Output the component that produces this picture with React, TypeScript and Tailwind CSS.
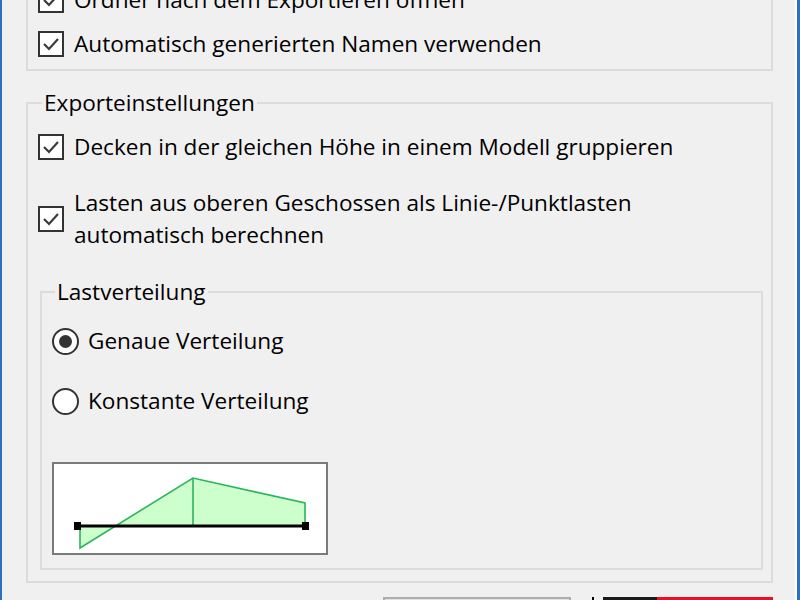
import React from "react";

function Check() {
  return (
    <div className="w-[26px] h-[26px] border-2 border-[#333333] bg-white flex items-center justify-center shrink-0">
      <svg width="20" height="20" viewBox="0 0 20 20">
        <path d="M3 10 L8 15 L17 5" stroke="#3a3a3a" strokeWidth="2.2" fill="none" />
      </svg>
    </div>
  );
}

function Radio({ on }: { on?: boolean }) {
  return (
    <div className="w-[27px] h-[27px] rounded-full border-2 border-[#333333] bg-white flex items-center justify-center shrink-0">
      {on ? <div className="w-[13px] h-[13px] rounded-full bg-[#333333]" /> : null}
    </div>
  );
}

function Diagram() {
  return (
    <div className="mt-[45px] ml-[10px] w-[276px] h-[93px] border-2 border-[#7a7a7a] bg-white">
      <svg width="272" height="89" viewBox="2 2 272 89">
        <polygon points="28,64 28,86 141,16 253,41 253,64" fill="#ccffcc" />
        <polyline points="28,64 28,86 141,16 253,41 253,64" fill="none" stroke="#2cb55c" strokeWidth="1.6" />
        <line x1="141" y1="16" x2="141" y2="64" stroke="#2cb55c" strokeWidth="1.6" />
        <line x1="25" y1="64" x2="254" y2="64" stroke="#000" strokeWidth="3" />
        <rect x="22" y="60" width="7" height="8" fill="#000" />
        <rect x="250" y="60" width="7" height="8" fill="#000" />
      </svg>
    </div>
  );
}

export default function App() {
  return (
    <div className="w-[800px] h-[600px] overflow-hidden bg-[#f0f0f0] flex font-['Open_Sans',sans-serif] text-[22.6px] text-black">
      <div className="w-[2px] bg-[#2a72bd] shrink-0" />
      <div className="flex-1 pl-[24px] pr-[22px]">
        <fieldset className="mt-[-40px] pt-[22px] pb-[9px] border-2 border-[#dcdcdc]">
          <div className="pl-[10px] flex items-center gap-[10px] h-[32px]">
            <Check />
            <span>Ordner nach dem Exportieren öffnen</span>
          </div>
          <div className="mt-[12px] pl-[10px] flex items-center gap-[10px] h-[32px]">
            <Check />
            <span>Automatisch generierten Namen verwenden</span>
          </div>
        </fieldset>

        <fieldset className="mt-[18px] pb-[11px] border-2 border-[#dcdcdc]">
          <legend className="ml-[14px] px-[2px] leading-[28px]">Exporteinstellungen</legend>
          <div className="mt-[14px] pl-[10px] flex items-center gap-[10px] h-[32px]">
            <Check />
            <span>Decken in der gleichen Höhe in einem Modell gruppieren</span>
          </div>
          <div className="mt-[24px] pl-[10px] flex items-center gap-[10px]">
            <Check />
            <span className="leading-[32px]">
              Lasten aus oberen Geschossen als Linie-/Punktlasten
              <br />
              automatisch berechnen
            </span>
          </div>

          <fieldset className="mt-[27px] ml-[12px] mr-[8px] pb-[13px] border-2 border-[#dcdcdc]">
            <legend className="ml-[13px] px-[2px] leading-[28px]">Lastverteilung</legend>
            <div className="mt-[19px] pl-[10px] flex items-center gap-[9px] h-[32px]">
              <Radio on />
              <span>Genaue Verteilung</span>
            </div>
            <div className="mt-[28px] pl-[10px] flex items-center gap-[9px] h-[32px]">
              <Radio />
              <span>Konstante Verteilung</span>
            </div>
            <Diagram />
          </fieldset>
        </fieldset>

        <div className="mt-[14px] flex h-[6px]">
          <div className="ml-[357px] w-[188px] border-t-2 border-x-2 border-[#adadad] bg-[#e1e1e1]" />
          <div className="ml-[21px] w-[2px] bg-black" />
          <div className="ml-[9px] w-[54px] bg-[#1a1a1a]" />
          <div className="w-[116px] bg-[#e81123]" />
        </div>
      </div>
      <div className="w-[2px] bg-white shrink-0" />
      <div className="w-[3px] bg-[#2a72bd] shrink-0" />
    </div>
  );
}
